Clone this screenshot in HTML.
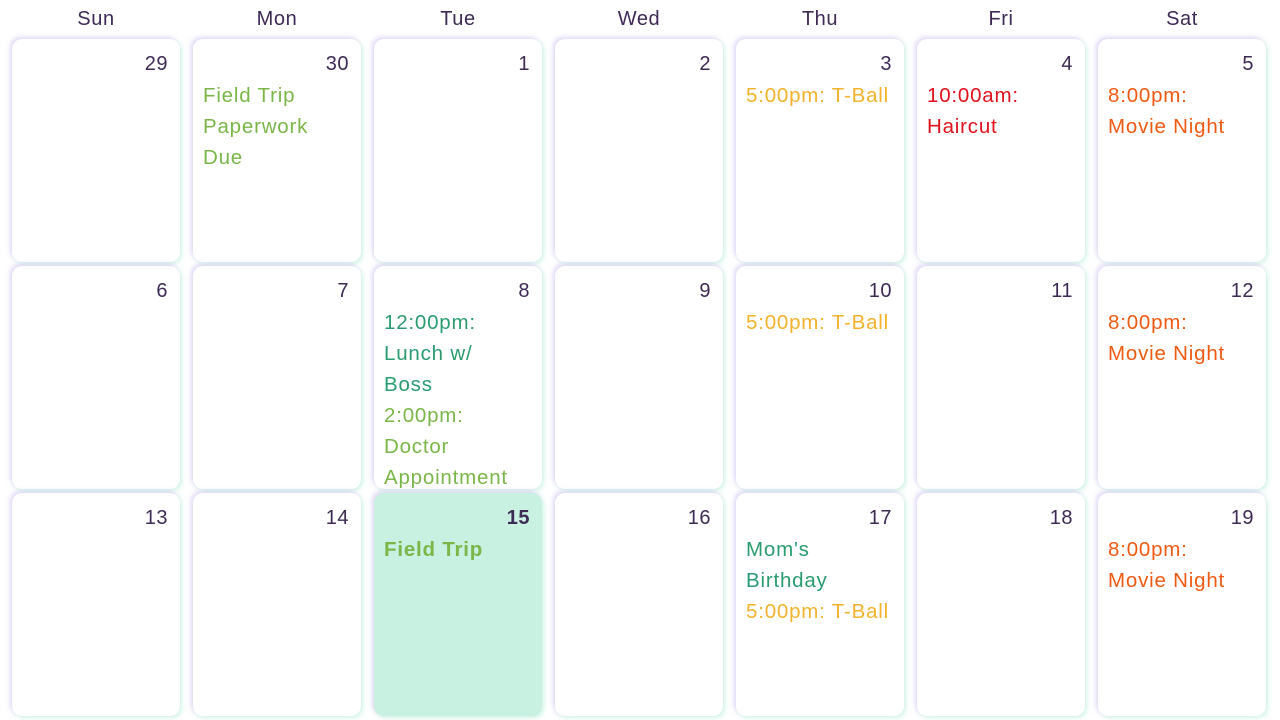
<!DOCTYPE html>
<html><head><meta charset="utf-8"><style>
*{margin:0;padding:0;box-sizing:border-box}
body{width:1280px;height:720px;background:#fff;font-family:"Liberation Sans",sans-serif;overflow:hidden;position:relative}
.h{position:absolute;top:8px;width:168px;text-align:center;font-size:20px;color:#3d2a55;letter-spacing:0.6px}
.c{position:absolute;width:168px;height:223px;background:#fff;border-radius:10px;box-shadow:-2px -2px 5px rgba(200,180,240,.5),2px 2px 5px rgba(180,240,215,.6);overflow:hidden}
.n{position:absolute;right:12px;top:14px;font-size:20px;color:#3d2a55;letter-spacing:0.5px}
.e{position:absolute;left:10px;top:41px;font-size:20.5px;line-height:31px;white-space:nowrap;letter-spacing:0.8px}
.g{color:#7ab648}.y{color:#f2b22c}.r{color:#e0111c}.o{color:#ef5a13}.t{color:#2a9c70}
.hl{background:#c8f1e1}
</style></head><body>
<div class="h" style="left:12px">Sun</div><div class="h" style="left:193px">Mon</div><div class="h" style="left:374px">Tue</div><div class="h" style="left:555px">Wed</div><div class="h" style="left:736px">Thu</div><div class="h" style="left:917px">Fri</div><div class="h" style="left:1098px">Sat</div>

<div class="c" style="left:12px;top:39px"><div class="n">29</div></div>
<div class="c" style="left:193px;top:39px"><div class="n">30</div><div class="e g">Field Trip<br>Paperwork<br>Due</div></div>
<div class="c" style="left:374px;top:39px"><div class="n">1</div></div>
<div class="c" style="left:555px;top:39px"><div class="n">2</div></div>
<div class="c" style="left:736px;top:39px"><div class="n">3</div><div class="e y">5:00pm: T-Ball</div></div>
<div class="c" style="left:917px;top:39px"><div class="n">4</div><div class="e r">10:00am:<br>Haircut</div></div>
<div class="c" style="left:1098px;top:39px"><div class="n">5</div><div class="e o">8:00pm:<br>Movie Night</div></div>

<div class="c" style="left:12px;top:266px"><div class="n">6</div></div>
<div class="c" style="left:193px;top:266px"><div class="n">7</div></div>
<div class="c" style="left:374px;top:266px"><div class="n">8</div><div class="e"><span class="t">12:00pm:<br>Lunch w/<br>Boss</span><br><span class="g">2:00pm:<br>Doctor<br>Appointment</span></div></div>
<div class="c" style="left:555px;top:266px"><div class="n">9</div></div>
<div class="c" style="left:736px;top:266px"><div class="n">10</div><div class="e y">5:00pm: T-Ball</div></div>
<div class="c" style="left:917px;top:266px"><div class="n">11</div></div>
<div class="c" style="left:1098px;top:266px"><div class="n">12</div><div class="e o">8:00pm:<br>Movie Night</div></div>

<div class="c" style="left:12px;top:493px"><div class="n">13</div></div>
<div class="c" style="left:193px;top:493px"><div class="n">14</div></div>
<div class="c hl" style="left:374px;top:493px"><div class="n" style="font-weight:bold">15</div><div class="e g" style="font-weight:bold">Field Trip</div></div>
<div class="c" style="left:555px;top:493px"><div class="n">16</div></div>
<div class="c" style="left:736px;top:493px"><div class="n">17</div><div class="e"><span class="t">Mom's<br>Birthday</span><br><span class="y">5:00pm: T-Ball</span></div></div>
<div class="c" style="left:917px;top:493px"><div class="n">18</div></div>
<div class="c" style="left:1098px;top:493px"><div class="n">19</div><div class="e o">8:00pm:<br>Movie Night</div></div>
</body></html>
